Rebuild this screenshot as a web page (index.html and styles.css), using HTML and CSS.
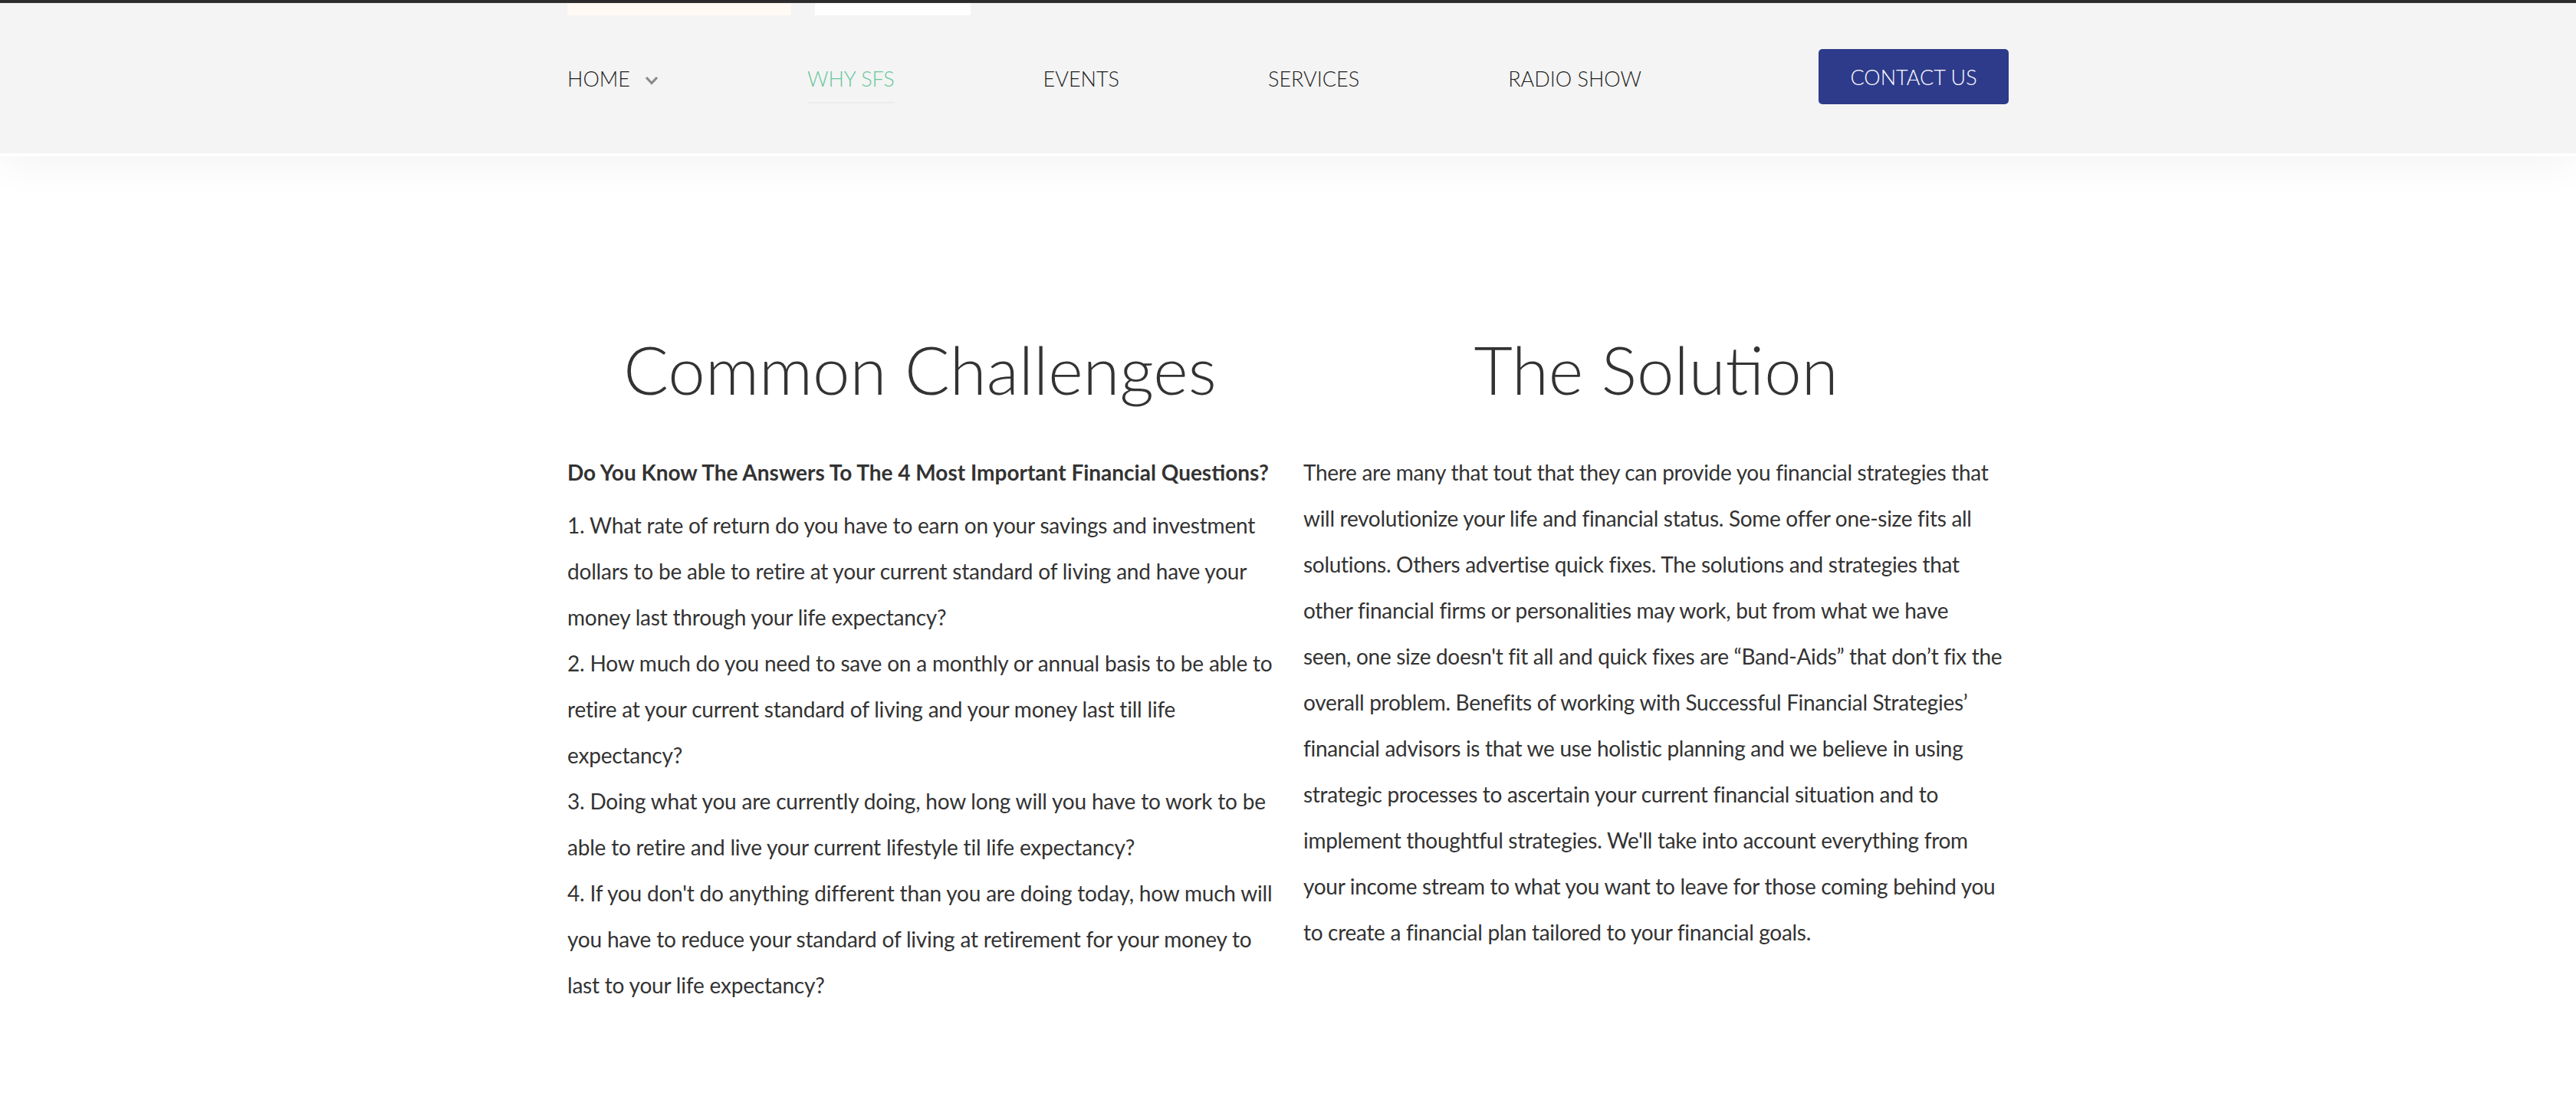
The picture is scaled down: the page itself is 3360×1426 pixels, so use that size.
FILE: index.html
```html
<!DOCTYPE html>
<html lang="en">
<head>
<meta charset="utf-8">
<title>Why SFS</title>
<link rel="stylesheet" href="styles.css">
</head>
<body>
<div class="topline"></div>
<header class="site-header">
  <div class="container">
    <div class="tabs">
      <span class="tab tab-cream"></span>
      <span class="tab tab-white"></span>
    </div>
    <nav class="nav">
      <a class="nav-link" href="#">HOME <svg class="chev" width="18" height="12" viewBox="0 0 18 12"><path d="M2 2 L9 9.5 L16 2" fill="none" stroke="#8a8a8a" stroke-width="3.2"/></svg></a>
      <a class="nav-link active" href="#">WHY SFS</a>
      <a class="nav-link" href="#">EVENTS</a>
      <a class="nav-link" href="#">SERVICES</a>
      <a class="nav-link" href="#">RADIO SHOW</a>
      <a class="btn-contact" href="#">CONTACT US</a>
    </nav>
  </div>
</header>
<main class="container content">
  <section class="col">
    <h2 class="col-title">Common Challenges</h2>
    <p class="lead">Do You Know The Answers To The 4 Most Important Financial Questions?</p>
    <p>1. What rate of return do you have to earn on your savings and investment dollars to be able to retire at your current standard of living and have your money last through your life expectancy?</p>
    <p>2. How much do you need to save on a monthly or annual basis to be able to retire at your current standard of living and your money last till life expectancy?</p>
    <p>3. Doing what you are currently doing, how long will you have to work to be able to retire and live your current lifestyle til life expectancy?</p>
    <p>4. If you don't do anything different than you are doing today, how much will you have to reduce your standard of living at retirement for your money to last to your life expectancy?</p>
  </section>
  <section class="col col-right">
    <h2 class="col-title">The Solution</h2>
    <p>There are many that tout that they can provide you financial strategies that will revolutionize your life and financial status. Some offer one-size fits all solutions. Others advertise quick fixes. The solutions and strategies that other financial firms or personalities may work, but from what we have<br>seen, one size doesn't fit all and quick fixes are “Band-Aids” that don’t fix the overall problem. Benefits of working with Successful Financial Strategies’ financial advisors is that we use holistic planning and we believe in using strategic processes to ascertain your current financial situation and to implement thoughtful strategies. We'll take into account everything from your income stream to what you want to leave for those coming behind you to create a financial plan tailored to your financial goals.</p>
  </section>
</main>
</body>
</html>
```
FILE: styles.css
```css
* { box-sizing: border-box; }
html, body { margin: 0; padding: 0; background: #ffffff; }
body {
  font-family: Lato, "Open Sans", "Liberation Sans", sans-serif;
  color: #333333;
}
.topline {
  height: 4px;
  background: #2c2c2c;
  border-bottom: 1px solid #3a3a3a;
}
.container {
  width: 1880px;
  margin: 0 auto;
}
.site-header {
  background: #f4f4f4;
  height: 200px;
  border-bottom: 4px solid #ffffff;
  box-shadow: 0 10px 50px rgba(0, 0, 0, 0.05);
  position: relative;
}
.tabs {
  display: flex;
  gap: 31px;
  height: 16px;
}
.tab { display: block; height: 16px; }
.tab-cream { width: 292px; background: #fffaf3; }
.tab-white { width: 203px; background: #ffffff; }
.nav {
  display: flex;
  align-items: center;
  height: 72px;
  margin-top: 44px;
}
.nav-link {
  font-size: 27px;
  font-weight: 300;
  color: #1e1e1e;
  text-decoration: none;
  margin-right: 194px;
  padding-top: 4px;
  display: flex;
  align-items: center;
  white-space: nowrap;
  position: relative;
}
.nav-link .chev { margin-left: 19px; margin-top: 6px; }
.nav-link.active { color: #67c89d; }
.nav-link.active::after {
  content: "";
  position: absolute;
  left: 0; right: 0;
  bottom: -16px;
  height: 2px;
  background: #ececec;
}
.btn-contact {
  margin-left: auto;
  width: 248px;
  height: 72px;
  background: #2e3b8b;
  border-radius: 5px;
  color: #ffffff;
  font-size: 27px;
  font-weight: 300;
  text-decoration: none;
  display: flex;
  align-items: center;
  justify-content: center;
  white-space: nowrap;
}
.content {
  display: grid;
  grid-template-columns: 1fr 1fr;
  column-gap: 40px;
  padding-top: 226px;
  padding-bottom: 120px;
}
.col-title {
  font-size: 87px;
  font-weight: 300;
  line-height: 1.2;
  text-align: center;
  margin: 0 0 52px;
  color: #333333;
}
.col p {
  font-size: 28px;
  letter-spacing: -0.2px;
  line-height: 60px;
  margin: 0;
  color: #333333;
}
.col-right p { letter-spacing: -0.3px; }
.col p.lead {
  font-weight: 700;
  letter-spacing: 0;
  margin-bottom: 9px;
}
```
